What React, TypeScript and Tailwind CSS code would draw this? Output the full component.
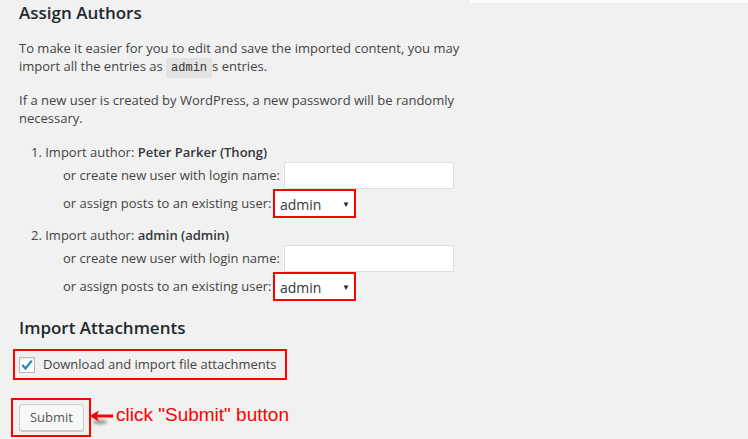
import React from "react";

function Select() {
  return (
    <div className="flex items-center w-[83px] h-[29px] border-2 border-[#ff0000] bg-white pl-[5px] pr-[4px] pt-[3px] justify-between">
      <span className="text-[14px] text-[#32373c] leading-none font-['Open_Sans',sans-serif]">admin</span>
      <span className="text-[8px] text-[#222] leading-none -mt-[3px]">▼</span>
    </div>
  );
}

function Author({ n, name, last }: { n: number; name: string; last?: boolean }) {
  return (
    <li className={last ? "" : "mb-[7px]"}>
      <div className="h-[20px] leading-[20px] pl-[12px]">
        {n}. Import author: <strong className="font-semibold text-[#32373c]">{name}</strong>
      </div>
      <div className="pl-[44px] flex flex-col">
        <div className="flex items-center h-[27px]">
          <span className="w-[216px]">or create new user with login name:</span>
          <input className="ml-[5px] w-[170px] h-[27px] bg-white border border-[#dddddd] outline-none" />
        </div>
        <div className="flex items-center h-[29px]">
          <span className="w-[210px]">or assign posts to an existing user:</span>
          <Select />
        </div>
      </div>
    </li>
  );
}

export default function App() {
  return (
    <div className="relative w-[748px] h-[439px] bg-[#f1f1f1] overflow-hidden font-['Open_Sans',sans-serif] text-[13px] text-[#444]">
      <div className="absolute top-0 left-[470px] right-0 h-[3px] bg-[#fbfbfb]" />
      <div className="w-[465px] overflow-hidden pl-[19px] whitespace-nowrap">
        <h2 className="text-[17px] font-semibold text-[#23282d] leading-[24px] mt-[1px]">Assign Authors</h2>
        <p className="mt-[14px] leading-[18px]">
          To make it easier for you to edit and save the imported content, you may
          <br />
          import all the entries as{" "}
          <code className="font-['Liberation_Mono',monospace] text-[12px] bg-[#e3e3e3] px-[5px] py-[3px] text-[#333]">admin</code>s entries.
        </p>
        <p className="mt-[14px] leading-[18px]">
          If a new user is created by WordPress, a new password will be randomly
          <br />
          necessary.
        </p>
        <ol className="mt-[15px] list-none">
          <Author n={1} name="Peter Parker (Thong)" />
          <Author n={2} name="admin (admin)" last />
        </ol>
        <h2 className="text-[17px] font-semibold text-[#23282d] leading-[24px] mt-[15px]">Import Attachments</h2>
      </div>
      <div className="ml-[13px] mt-[9px] w-[274px] h-[31px] border-2 border-[#ff0000] flex items-center pl-[4px]">
        <span className="w-[16px] h-[16px] bg-white border border-[#b4b9be] shadow-[inset_0_1px_2px_rgba(0,0,0,0.1)] flex items-center justify-center">
          <svg width="14" height="14" viewBox="0 0 14 14">
            <path d="M2.3 7 L5.5 10.4 L11.8 2.6" fill="none" stroke="#1e8cbe" strokeWidth="2.3" />
          </svg>
        </span>
        <span className="ml-[8px] text-[13px] text-[#444]">Download and import file attachments</span>
      </div>
      <div className="flex items-start mt-[18px] ml-[11px]">
        <div className="w-[80px] h-[39px] border-2 border-[#ff0000] flex items-center pl-[6px]">
          <button className="w-[65px] h-[27px] bg-[#f7f7f7] border border-[#cccccc] rounded-[3px] shadow-[0_1px_0_#cccccc] text-[13px] leading-none text-[#555] font-['Open_Sans',sans-serif]">
            Submit
          </button>
        </div>
        <svg width="26" height="20" viewBox="0 0 26 20" className="ml-[-2px] mt-[11px]">
          <defs>
            <filter id="blur" x="-50%" y="-50%" width="200%" height="200%">
              <feGaussianBlur stdDeviation="1.8" />
            </filter>
          </defs>
          <ellipse cx="11" cy="13" rx="7" ry="2.5" fill="rgba(0,0,0,0.35)" filter="url(#blur)" />
          <path d="M24 7 L7 7" stroke="#ff0000" strokeWidth="3" />
          <path d="M0.5 7 L10 1.5 L7.5 7 L10 12.5 Z" fill="#ff0000" />
        </svg>
        <span className="ml-[1px] mt-[7px] font-['Liberation_Sans',Arial,sans-serif] text-[19px] text-[#ff0000] leading-none">
          click "Submit" button
        </span>
      </div>
    </div>
  );
}
